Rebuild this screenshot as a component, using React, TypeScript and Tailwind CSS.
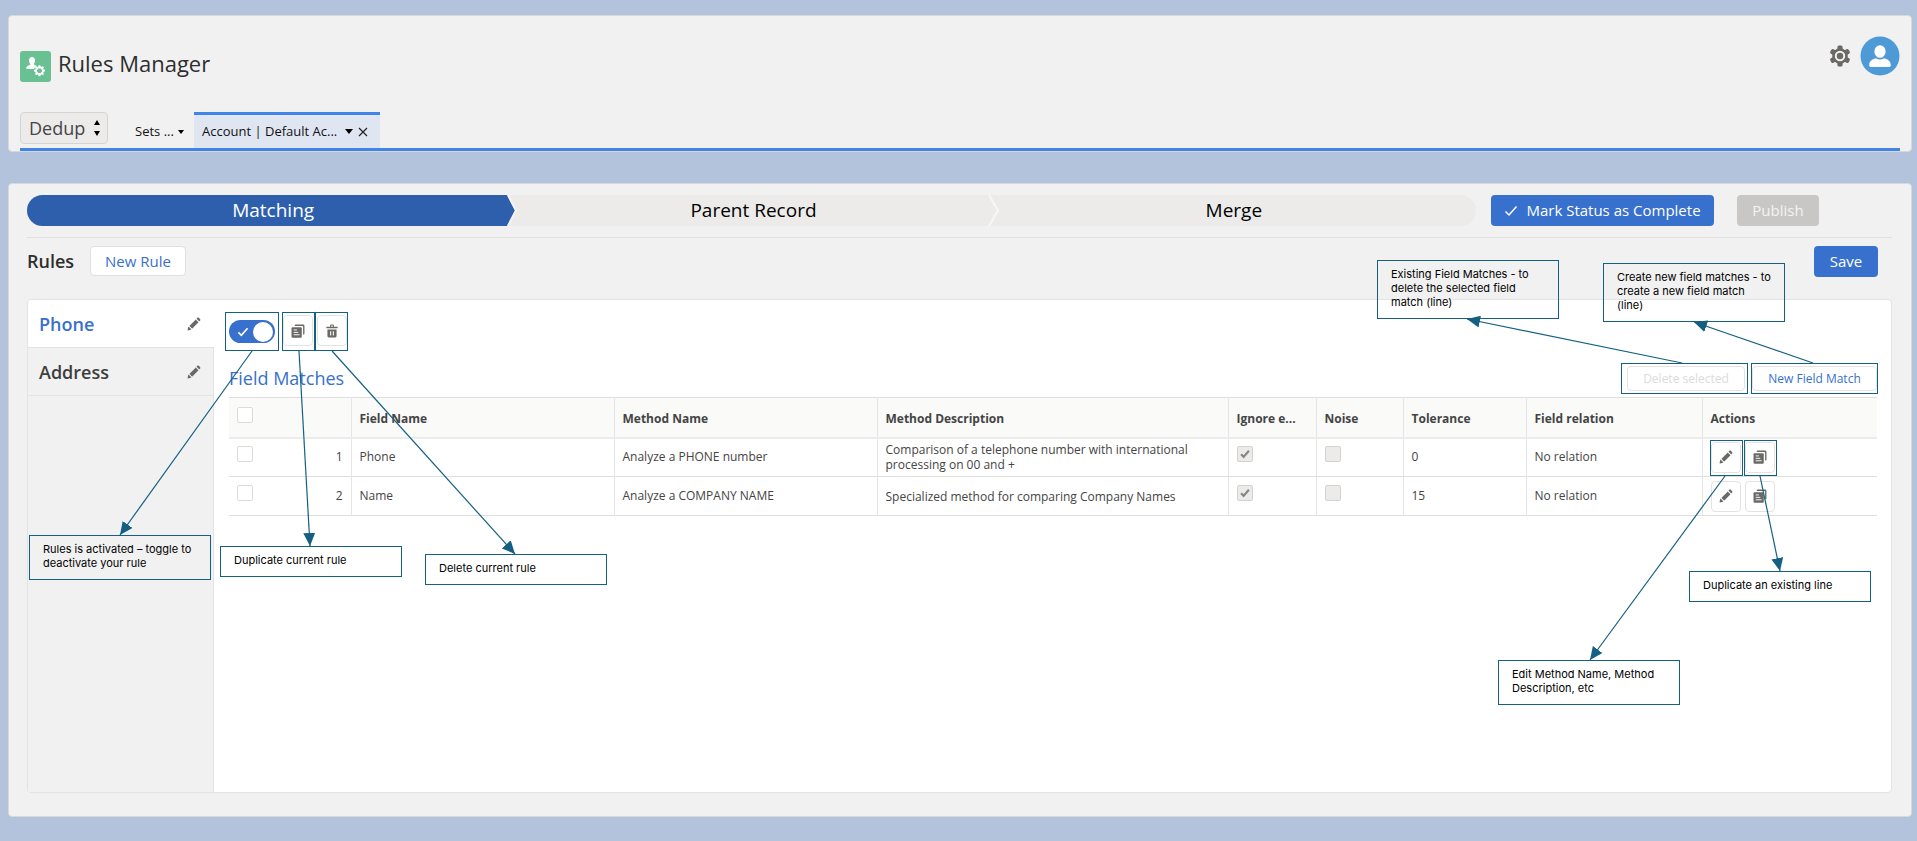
import type { ReactNode } from "react";
import clsx from "clsx";

const steps = ["Parent Record", "Merge"];

const rules = [
	{ name: "Phone", active: true },
	{ name: "Address", active: false },
];

const fieldMatches = [
	{
		id: 1,
		field: "Phone",
		method: "Analyze a PHONE number",
		description:
			"Comparison of a telephone number with international processing on 00 and +",
		tolerance: 0,
		relation: "No relation",
		noted: true,
	},
	{
		id: 2,
		field: "Name",
		method: "Analyze a COMPANY NAME",
		description: "Specialized method for comparing Company Names",
		tolerance: 15,
		relation: "No relation",
		noted: false,
	},
];

const PencilIcon = () => (
	<svg viewBox="0 0 52 52" className="size-3.5 fill-[#6b6966]" aria-hidden="true">
		<path d="M9.5 33.4l8.9 8.9c.4.4 1 .4 1.4 0L42 20c.4-.4.4-1 0-1.4l-8.8-8.8c-.4-.4-1-.4-1.4 0L9.5 32.1c-.4.4-.4 1 0 1.3zM36.1 5.7c-.4.4-.4 1 0 1.4l8.8 8.8c.4.4 1 .4 1.4 0l2.5-2.5c1.6-1.5 1.6-3.9 0-5.5l-4.7-4.7c-1.6-1.6-4.1-1.6-5.7 0l-2.3 2.5zM2.1 48.2c-.2 1 .7 1.9 1.7 1.7l10.9-2.6c.4-.1.7-.3.9-.5l.2-.2c.2-.2.3-.9-.1-1.3l-9-9c-.4-.4-1.1-.3-1.3-.1l-.2.2c-.3.3-.4.6-.5.9L2.1 48.2z" />
	</svg>
);

const CopyIcon = () => (
	<svg viewBox="0 0 52 52" className="size-3.5" aria-hidden="true">
		<path
			fill="#6b6966"
			d="M14 5a3 3 0 0 1 3-3h28a5 5 0 0 1 5 5v29a3 3 0 0 1-3 3h-2V10a3 3 0 0 0-3-3H14z"
		/>
		<rect x="2" y="12" width="38" height="39" rx="4" fill="#6b6966" />
		<path stroke="#fff" strokeWidth="3.5" d="M10 22h12M10 31h17M10 40h22" />
	</svg>
);

const TrashIcon = () => (
	<svg viewBox="0 0 52 52" className="size-3.5 fill-[#6b6966]" aria-hidden="true">
		<path d="M45.5 10H33V6c0-2.2-1.8-4-4-4h-6c-2.2 0-4 1.8-4 4v4H6.5c-.8 0-1.5.7-1.5 1.5v3c0 .8.7 1.5 1.5 1.5h39c.8 0 1.5-.7 1.5-1.5v-3c0-.8-.7-1.5-1.5-1.5zM23 7c0-.6.4-1 1-1h4c.6 0 1 .4 1 1v3h-6V7zM41.5 20h-31C9.7 20 9 20.7 9 21.5V45c0 2.8 2.2 5 5 5h24c2.8 0 5-2.2 5-5V21.5c0-.8-.7-1.5-1.5-1.5zM23 42c0 .6-.4 1-1 1h-2c-.6 0-1-.4-1-1V28c0-.6.4-1 1-1h2c.6 0 1 .4 1 1v14zm10 0c0 .6-.4 1-1 1h-2c-.6 0-1-.4-1-1V28c0-.6.4-1 1-1h2c.6 0 1 .4 1 1v14z" />
	</svg>
);

const GearIcon = () => (
	<svg viewBox="-12 -12 24 24" className="size-6 fill-[#6b6966]" aria-hidden="true">
		{[0, 60, 120, 180, 240, 300].map((angle) => (
			<rect
				key={angle}
				x="-2.6"
				y="-10.6"
				width="5.2"
				height="6"
				rx="1.6"
				transform={`rotate(${angle})`}
			/>
		))}
		<circle r="7.8" />
		<circle r="4.2" fill="none" stroke="#f1f1f1" strokeWidth="2" />
	</svg>
);

const UserGearIcon = () => (
	<svg viewBox="0 0 32 32" className="size-8" aria-hidden="true">
		<rect width="31" height="31" rx="3" fill="#69c093" />
		<g fill="#fff">
			<ellipse cx="12" cy="9.5" rx="3" ry="3.6" />
			<path d="M10.4 11h3.4v2.6c1 .5 2 .8 2.8 1.3-1.5 1-2.3 2-2.6 3.2H7c-.6 0-.8-.4-.7-1 .2-2 2.4-2.6 4.1-3.5z" />
			{[0, 45, 90, 135, 180, 225, 270, 315].map((angle) => (
				<rect
					key={angle}
					x="18.4"
					y="14.2"
					width="2.2"
					height="3"
					rx=".7"
					transform={`rotate(${angle} 19.5 19.7)`}
				/>
			))}
		</g>
		<circle cx="19.5" cy="19.7" r="3.4" fill="none" stroke="#fff" strokeWidth="1.7" />
	</svg>
);

const Avatar = () => (
	<svg viewBox="0 0 40 40" className="size-10" aria-hidden="true">
		<circle cx="20" cy="20" r="19.5" fill="#4d9ad6" />
		<ellipse cx="20" cy="15.5" rx="5.6" ry="6.3" fill="#fff" />
		<path
			fill="#fff"
			d="M9.2 29.2c0-4 2.8-6 6.6-7 1.3.9 2.7 1.3 4.2 1.3s2.9-.4 4.2-1.3c3.8 1 6.6 3 6.6 7 0 1.2-.7 1.8-1.8 1.8H11c-1.1 0-1.8-.6-1.8-1.8z"
		/>
	</svg>
);

const Check = ({ className }: { className?: string }) => (
	<svg
		viewBox="0 0 14 12"
		className={className}
		fill="none"
		stroke="currentColor"
		aria-hidden="true"
	>
		<path d="M1.5 6.5l3.5 3.5 7.5-8.5" />
	</svg>
);

// Outline drawn around a control that has a note attached
const outline = "border border-[#156082]";

const IconButton = ({ label, children }: { label: string; children: ReactNode }) => (
	<button
		type="button"
		aria-label={label}
		className="flex h-[31px] w-[30px] items-center justify-center rounded border border-[#e3e3e3] bg-white"
	>
		{children}
	</button>
);

const Note = ({ className, children }: { className: string; children: ReactNode }) => (
	<p
		className={clsx(
			"absolute w-[182px] border border-[#156082] pt-1.5 pr-[11px] pb-[9px] pl-[13px] font-[Inter,sans-serif] text-[11px] leading-[14px] text-black",
			className,
		)}
	>
		{children}
	</p>
);

const Arrows = ({
	id,
	lines,
	className,
}: {
	id: string;
	lines: number[][];
	className: string;
}) => (
	<svg
		width="620"
		height="720"
		className={clsx("pointer-events-none absolute top-0", className)}
		aria-hidden="true"
	>
		<defs>
			<marker
				id={id}
				markerUnits="userSpaceOnUse"
				markerWidth="13"
				markerHeight="12"
				refX="13"
				refY="6"
				orient="auto"
			>
				<path d="M0 0l13 6-13 6z" fill="#156082" />
			</marker>
		</defs>
		{lines.map(([x1, y1, x2, y2]) => (
			<line
				key={`${x1}-${y1}`}
				x1={x1}
				y1={y1}
				x2={x2}
				y2={y2}
				stroke="#156082"
				strokeWidth="1.2"
				markerEnd={`url(#${id})`}
			/>
		))}
	</svg>
);

const Header = () => (
	<header className="rounded border border-[#d8d8dc] bg-[#f1f1f1] px-[11px]">
		<div className="flex justify-between pt-5">
			<div className="flex h-[76px] items-start gap-1.5 pt-[15px]">
				<UserGearIcon />
				<h1 className="-mt-1 text-[22px] leading-8 text-[#2e2e2e]">Rules Manager</h1>
			</div>
			<div className="flex h-10 items-center gap-2">
				<button type="button" aria-label="Settings">
					<GearIcon />
				</button>
				<button type="button" aria-label="Account">
					<Avatar />
				</button>
			</div>
		</div>
		<nav className="flex h-[39px] items-start border-b-[3px] border-[#4084e8]">
			<div className="relative">
				<select
					aria-label="Module"
					className="h-8 w-[88px] appearance-none rounded border border-[#d4d4d4] bg-[#ecebea] pl-2 text-lg leading-6 text-[#444]"
				>
					<option>Dedup</option>
				</select>
				<svg
					viewBox="0 0 6 16"
					className="pointer-events-none absolute top-2 right-2 h-4 w-1.5"
					aria-hidden="true"
				>
					<path d="M3 0l3 5H0zM3 16l3-5H0z" />
				</svg>
			</div>
			<button
				type="button"
				className="flex h-9 w-[86px] items-center gap-1 pt-1 pl-[27px] text-[13px] whitespace-nowrap text-[#111]"
			>
				Sets ...
				<svg viewBox="0 0 6 4" className="h-1 w-1.5" aria-hidden="true">
					<path d="M0 0h6L3 4z" />
				</svg>
			</button>
			<div className="flex h-9 w-[186px] items-center justify-between border-t-[3px] border-[#4084e8] bg-[#e0e6f1] pr-3 pl-2 text-[13px] whitespace-nowrap text-[#111]">
				<button type="button" className="flex items-center gap-2">
					Account | Default Ac...
					<svg viewBox="0 0 8 5" className="h-[5px] w-2" aria-hidden="true">
						<path d="M0 0h8L4 5z" />
					</svg>
				</button>
				<button type="button" aria-label="Close tab">
					<svg viewBox="0 0 10 10" className="size-2.5" stroke="#222" aria-hidden="true">
						<path strokeWidth="1.2" d="M1 1l8 8M9 1L1 9" />
					</svg>
				</button>
			</div>
		</nav>
	</header>
);

const Path = () => (
	<ol className="flex h-[31px] flex-1 overflow-hidden rounded-full bg-[#ecebea] pr-2 text-[19px] text-black">
		<li className="relative flex flex-1 items-center justify-center bg-[#2e5fad] pl-3 text-white">
			Matching
			<svg viewBox="0 0 12 31" className="absolute left-full h-[31px] w-3" aria-hidden="true">
				<path d="M0 0l8 15.5L0 31z" fill="#2e5fad" />
				<path d="M1 0l8 15.5L1 31" fill="none" stroke="#f4f4f4" strokeWidth="2" />
			</svg>
		</li>
		{steps.map((step, i) => (
			<li key={step} className="relative flex flex-1 items-center justify-center pl-3">
				{step}
				{i === 0 && (
					<svg viewBox="0 0 12 31" className="absolute left-full h-[31px] w-3" aria-hidden="true">
						<path d="M1 0l9 15.5L1 31" fill="none" stroke="#f7f7f7" strokeWidth="2" />
					</svg>
				)}
			</li>
		))}
	</ol>
);

const Sidebar = () => (
	<aside className="w-[186px] shrink-0 rounded-l border-r border-[#e3e3e3] bg-[#f1f1f1]">
		{rules.map((rule) => (
			<div
				key={rule.name}
				className={clsx(
					"-mr-px flex h-12 items-center justify-between border-b border-[#e3e3e3] pr-[13px] pl-[11px]",
					rule.active && "rounded-tl bg-white",
				)}
			>
				<a
					href="#rule"
					className={clsx(
						"text-lg font-semibold",
						rule.active ? "text-[#3870cd]" : "text-[#3e3e3c]",
					)}
				>
					{rule.name}
				</a>
				<button type="button" aria-label={`Rename ${rule.name}`}>
					<PencilIcon />
				</button>
			</div>
		))}
	</aside>
);

const Box = ({
	label,
	checked,
	disabled,
}: {
	label: string;
	checked?: boolean;
	disabled?: boolean;
}) => (
	<span className="relative block size-4">
		<input
			type="checkbox"
			aria-label={label}
			defaultChecked={checked}
			disabled={disabled}
			className="block size-4 appearance-none rounded-xs border border-[#dddbda] bg-white disabled:border-[#d3d3d1] disabled:bg-[#ecebea]"
		/>
		{checked && (
			<Check className="pointer-events-none absolute top-[3px] left-[3px] size-2.5 stroke-3 text-[#858585]" />
		)}
	</span>
);

const th = "truncate border-r border-[#e5e5e5] px-2 text-left font-bold last:border-r-0";
const td = "border-r border-[#e5e5e5] px-2 last:border-r-0";

const FieldMatchTable = () => (
	<table className="w-full table-fixed border-y border-[#dedede] text-xs text-[#444]">
		<colgroup>
			<col className="w-[122px]" />
			<col className="w-[263px]" />
			<col className="w-[263px]" />
			<col />
			<col className="w-[88px]" />
			<col className="w-[87px]" />
			<col className="w-[123px]" />
			<col className="w-[176px]" />
			<col className="w-[175px]" />
		</colgroup>
		<thead>
			<tr className="h-10 border-b-2 border-[#ececec] bg-[#fafaf9]">
				<th className={clsx(th, "pb-1")}>
					<Box label="Select all" />
				</th>
				<th className={clsx(th, "pt-1")}>Field Name</th>
				<th className={clsx(th, "pt-1")}>Method Name</th>
				<th className={clsx(th, "pt-1")}>Method Description</th>
				<th className={clsx(th, "pt-1")}>Ignore e...</th>
				<th className={clsx(th, "pt-1")}>Noise</th>
				<th className={clsx(th, "pt-1")}>Tolerance</th>
				<th className={clsx(th, "pt-1")}>Field relation</th>
				<th className={clsx(th, "pt-1")}>Actions</th>
			</tr>
		</thead>
		<tbody>
			{fieldMatches.map((row) => (
				<tr key={row.id} className="h-[39px] border-b border-[#dedede]">
					<td className={td}>
						<div className="flex items-center justify-between">
							<span className="pb-1.5">
								<Box label={`Select ${row.field}`} />
							</span>
							{row.id}
						</div>
					</td>
					<td className={td}>{row.field}</td>
					<td className={td}>{row.method}</td>
					<td className={clsx(td, "leading-[15px]")}>{row.description}</td>
					<td className={clsx(td, "pb-1.5")}>
						<Box label="Ignore empty" checked disabled />
					</td>
					<td className={clsx(td, "pb-1.5")}>
						<Box label="Noise" disabled />
					</td>
					<td className={td}>{row.tolerance}</td>
					<td className={td}>{row.relation}</td>
					<td className={td}>
						<div className="relative flex gap-1">
							<IconButton label="Edit line">
								<PencilIcon />
							</IconButton>
							<IconButton label="Duplicate line">
								<CopyIcon />
							</IconButton>
							{row.noted && (
								<>
									<span className="pointer-events-none absolute -top-0.5 -left-px h-9 w-[33px] border border-[#156082]" />
									<span className="pointer-events-none absolute -top-0.5 left-[33px] h-9 w-[33px] border border-[#156082]" />
								</>
							)}
						</div>
					</td>
				</tr>
			))}
		</tbody>
	</table>
);

const RuleDetail = () => (
	<section className="min-w-0 flex-1 pt-3 pr-3.5 pl-[15px]">
		<div className="-ml-1 flex h-[39px]">
			<div className={clsx(outline, "flex w-[54px] items-center justify-center")}>
				<label className="relative flex h-[23px] w-[46px] items-center justify-end rounded-full bg-[#3870cd] p-0.5 text-white">
					<input
						type="checkbox"
						role="switch"
						aria-label="Rule activated"
						defaultChecked
						className="absolute inset-0 appearance-none"
					/>
					<Check className="absolute left-[7px] h-2.5 w-3.5 stroke-2" />
					<span className="size-5 rounded-full bg-white" />
				</label>
			</div>
			<div className={clsx(outline, "ml-[3px] w-[33px] pt-0.5")}>
				<IconButton label="Duplicate rule">
					<CopyIcon />
				</IconButton>
			</div>
			<div className={clsx(outline, "w-[33px] pt-0.5 pl-px")}>
				<IconButton label="Delete rule">
					<TrashIcon />
				</IconButton>
			</div>
		</div>
		<div className="-mr-px flex h-[46px] items-end justify-between pb-[3px]">
			<h3 className="pb-0.5 text-lg leading-7 text-[#3870cd]">Field Matches</h3>
			<div className="flex gap-[3px] text-xs">
				<div className={clsx(outline, "flex h-[31px] w-[127px] items-center justify-end pr-0.5")}>
					<button
						type="button"
						disabled
						className="h-[25px] w-[118px] rounded border border-[#e3e3e3] bg-white text-[#dddbda]"
					>
						Delete selected
					</button>
				</div>
				<div className={clsx(outline, "flex h-[31px] w-[127px] items-center")}>
					<button
						type="button"
						className="h-[25px] w-full rounded border border-[#e3e3e3] bg-white text-[#3870cd]"
					>
						New Field Match
					</button>
				</div>
			</div>
		</div>
		<FieldMatchTable />
	</section>
);

export default function App() {
	return (
		<div className="relative flex min-h-screen flex-col gap-[31px] bg-[#b4c3dc] pt-[15px] pr-[5px] pb-6 pl-2 font-['Open_Sans',sans-serif]">
			<Header />

			<main className="flex flex-1 flex-col rounded border border-[#d8d8dc] bg-[#f1f1f1] pt-[11px] pr-[19px] pb-[23px] pl-[18px]">
				<div className="flex items-center border-b border-[#e0e0e0] pr-[73px] pb-[11px]">
					<Path />
					<button
						type="button"
						className="ml-[15px] flex h-[31px] w-[223px] items-center justify-center gap-2 rounded bg-[#3870cd] text-[15px] text-white"
					>
						<Check className="h-3 w-3.5 stroke-[1.5]" />
						Mark Status as Complete
					</button>
					<button
						type="button"
						disabled
						className="ml-[23px] h-[31px] w-[82px] rounded bg-[#c9c7c5] text-[15px] text-[#f3f3f3]"
					>
						Publish
					</button>
				</div>

				<div className="flex h-[61px] items-start pt-2 pr-3.5">
					<h2 className="w-[63px] text-lg leading-[30px] font-semibold text-[#2e2e2e]">Rules</h2>
					<button
						type="button"
						className="h-[30px] w-24 rounded border border-[#e0e0e0] bg-white text-[15px] text-[#3870cd]"
					>
						New Rule
					</button>
					<button
						type="button"
						className="ml-auto h-[31px] w-16 rounded bg-[#3870cd] text-[15px] text-white"
					>
						Save
					</button>
				</div>

				<div className="flex flex-1 rounded border border-[#e3e3e3] bg-white">
					<Sidebar />
					<RuleDetail />
				</div>
			</main>

			<Arrows
				id="head-left"
				className="left-0"
				lines={[
					[252, 351, 120, 535],
					[299, 351, 310, 546],
					[332, 351, 515, 554],
				]}
			/>
			<Arrows
				id="head-right"
				className="right-0"
				lines={[
					[385, 363, 170, 319],
					[516, 363, 397, 322],
					[428, 476, 293, 660],
					[463, 476, 483, 571],
				]}
			/>
			<Note className="top-[535px] left-[29px]">Rules is activated – toggle to deactivate your rule</Note>
			<Note className="top-[546px] left-[220px]">Duplicate current rule</Note>
			<Note className="top-[554px] left-[425px]">Delete current rule</Note>
			<Note className="top-[260px] right-[358px]">
				Existing Field Matches - to delete the selected field match (line)
			</Note>
			<Note className="top-[263px] right-[132px]">
				Create new field matches - to create a new field match (line)
			</Note>
			<Note className="top-[571px] right-[46px]">Duplicate an existing line</Note>
			<Note className="top-[660px] right-[237px]">Edit Method Name, Method Description, etc</Note>
		</div>
	);
}
